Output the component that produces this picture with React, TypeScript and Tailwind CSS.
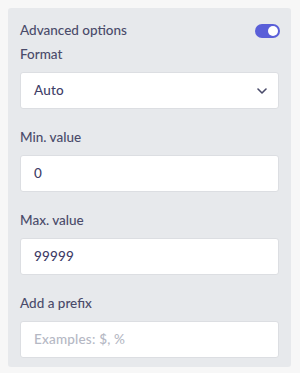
import React from "react";

function Field({ label, children }: { label: string; children: React.ReactNode }) {
  return (
    <div className="flex flex-col">
      <div className="text-[13.5px] leading-[17px] font-medium text-[#4a4b6a]">{label}</div>
      <div className="mt-[9px]">{children}</div>
    </div>
  );
}

function Box({ children }: { children: React.ReactNode }) {
  return (
    <div className="h-[37px] bg-white border border-[#dcdee2] rounded-[3px] flex items-center pl-[13px] pr-[11px] text-[13.5px] font-medium text-[#3f4068] tracking-[0.2px]">
      {children}
    </div>
  );
}

export default function App() {
  return (
    <div
      className="w-[300px] h-[373px] bg-[#f7f7f7] p-[8px] pr-[9px] pb-[6px]"
      style={{ fontFamily: "Lato, 'Open Sans', sans-serif" }}
    >
      <div className="h-full bg-[#e7e9ec] rounded-[3px] px-[12px] pt-[14px] flex flex-col">
        <div className="flex items-center justify-between">
          <span className="text-[13.5px] leading-[17px] font-medium text-[#4a4b6a]">Advanced options</span>
          <div className="w-[25px] h-[14px] rounded-full bg-[#5a5fd8] flex items-center justify-end pr-[2px] mr-[-1px]">
            <div className="w-[10px] h-[10px] rounded-full bg-white" />
          </div>
        </div>
        <div className="mt-[7px]">
          <Field label="Format">
            <Box>
              <span className="flex-1">Auto</span>
              <svg width="10" height="6" viewBox="0 0 10 6">
                <path d="M1 1l4 4 4-4" fill="none" stroke="#4a4b6a" strokeWidth="1.6" strokeLinecap="round" strokeLinejoin="round" />
              </svg>
            </Box>
          </Field>
        </div>
        <div className="mt-[20px]">
          <Field label="Min. value">
            <Box>0</Box>
          </Field>
        </div>
        <div className="mt-[20px]">
          <Field label="Max. value">
            <Box>99999</Box>
          </Field>
        </div>
        <div className="mt-[20px]">
          <Field label="Add a prefix">
            <Box>
              <span className="text-[#b5b8c4]">Examples: $, %</span>
            </Box>
          </Field>
        </div>
      </div>
    </div>
  );
}
